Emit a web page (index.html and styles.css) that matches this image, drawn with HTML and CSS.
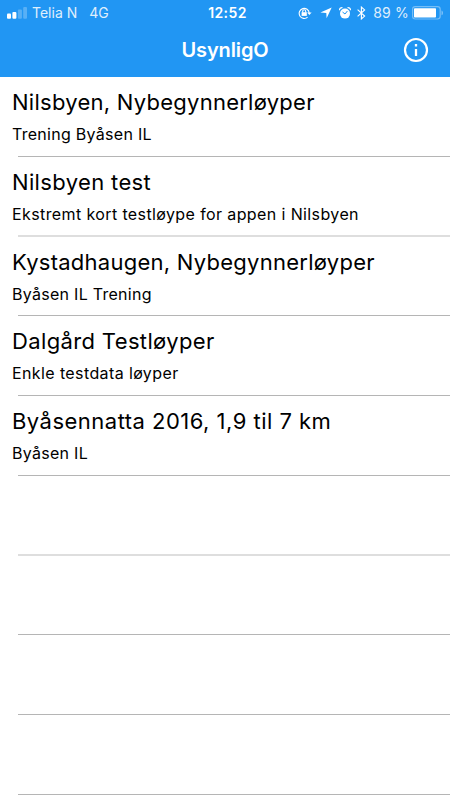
FILE: index.html
```html
<!DOCTYPE html>
<html lang="no">
<head>
<meta charset="utf-8">
<title>UsynligO</title>
<link rel="stylesheet" href="styles.css">
</head>
<body>
<header class="header">
  <div class="status">
    <div class="carrier">
      <svg class="signal" width="20" height="12" viewBox="0 0 20 12" fill="#fff"><rect x="0" y="6.5" width="4" height="5.2" rx="1"/><rect x="5.4" y="5" width="4" height="6.7" rx="1"/><rect x="10.9" y="2.5" width="4" height="9.2" rx="1" opacity=".25"/><rect x="16.2" y="0" width="3.8" height="11.7" rx="1" opacity=".25"/></svg>
      <span class="operator">Telia N</span><span class="network">4G</span>
    </div>
    <span class="clock">12:52</span>
    <div class="indicators">
      <svg width="14" height="12" viewBox="0 0 14 12" fill="none" stroke="#fff" stroke-width="1.1"><path d="M9.6 10.1A5 5 0 1 1 11.2 6.1"/><path d="M9.1 5.5h4.5L11.4 8z" fill="#fff" stroke="none"/><rect x="3.6" y="5.2" width="5.2" height="3.7" fill="#fff" stroke="none"/><path d="M4.7 5.5V4.3a1.5 1.5 0 0 1 3 0v1.2"/></svg>
      <svg class="location" width="12" height="12" viewBox="0 0 12 12" fill="#fff"><path d="M11.7.4L6.6 11.3 6.3 6.1.4 5.6z"/></svg>
      <svg class="alarm" width="12" height="12" viewBox="0 0 12 12"><circle cx="6" cy="6.6" r="5" fill="#fff"/><path d="M.6 3.2Q.4.5 3.5.7M8.5.7Q11.6.5 11.4 3.2" fill="none" stroke="#fff" stroke-width="1.2"/><path d="M3.5 5L6 7l2.4-3" fill="none" stroke="#2196f3"/></svg>
      <svg class="bluetooth" width="9" height="14" viewBox="0 0 9 14" fill="none" stroke="#fff" stroke-width="1.15"><path d="M.6 3.7l7 6.4-3.2 2.8V1.1l3.2 2.8-7 6.4"/></svg>
      <span class="percent">89 %</span>
      <svg class="battery" width="32" height="14" viewBox="0 0 32 14"><rect x=".6" y=".6" width="27.6" height="12.4" rx="2.7" fill="none" stroke="#fff" stroke-opacity=".38" stroke-width="1.2"/><rect x="2" y="2.3" width="22" height="9.2" rx=".8" fill="#fff"/><path d="M29.5 4.5c2 .6 2 4.2 0 4.8z" fill="#fff" opacity=".4"/></svg>
    </div>
  </div>
  <div class="toolbar">
    <h1 class="heading">UsynligO</h1>
    <svg class="info" width="26" height="26" viewBox="0 0 26 26" fill="none" stroke="#fff"><circle cx="13" cy="13" r="11" stroke-width="2.2"/><path d="M13 12v7M13 7v2.5" stroke-width="2.3"/></svg>
  </div>
</header>
<main class="list">
  <article class="row"><h2 class="title">Nilsbyen, Nybegynnerløyper</h2><p class="detail">Trening Byåsen IL</p></article>
  <article class="row soft"><h2 class="title medium">Nilsbyen test</h2><p class="detail loose">Ekstremt kort testløype for appen i Nilsbyen</p></article>
  <article class="row short"><h2 class="title">Kystadhaugen, Nybegynnerløyper</h2><p class="detail">Byåsen IL Trening</p></article>
  <article class="row"><h2 class="title medium">Dalgård Testløyper</h2><p class="detail loose">Enkle testdata løyper</p></article>
  <article class="row"><h2 class="title wide">Byåsennatta 2016, 1,9 til 7 km</h2><p class="detail">Byåsen IL</p></article>
  <div class="row soft"></div>
  <div class="row short"></div>
  <div class="row"></div>
  <div class="row"></div>
</main>
</body>
</html>
```

FILE: styles.css
```css
* { box-sizing: border-box; }
body { margin: 0; height: 800px; overflow: hidden; background: #fff; color: #000; font-family: Inter, "Liberation Sans", sans-serif; }
svg { display: block; flex: none; }
.header { height: 77px; background: #2196f3; color: #fff; }
.status { display: grid; grid-template-columns: 1fr auto 1fr; align-items: center; height: 25px; padding: 0 7px; font-size: 14px; line-height: 20px; white-space: nowrap; }
.carrier { display: flex; align-items: center; }
.operator { margin-left: 5px; opacity: .85; }
.network { margin-left: 12px; opacity: .85; }
.clock { font-weight: 600; letter-spacing: .4px; margin-left: 5px; }
.indicators { display: flex; align-items: center; justify-content: flex-end; margin-right: -1px; }
.location { margin-left: 8px; }
.alarm { margin-left: 7px; }
.bluetooth { margin-left: 6px; }
.percent { margin-left: 7px; letter-spacing: .2px; opacity: .85; }
.battery { margin-left: 3px; }
.toolbar { display: grid; grid-template-columns: 1fr auto 1fr; align-items: center; height: 50px; }
.heading { grid-column: 2; margin: 0; font-size: 20px; line-height: 26px; font-weight: 600; letter-spacing: -.12px; }
.info { justify-self: end; margin-right: 21px; }
.row { display: flex; flex-direction: column; height: 80px; padding: 12px 0 0 12px; background: linear-gradient(#b5b5b5, #b5b5b5) 18px 100% / 100% 1px no-repeat; }
.short { height: 79px; }
.soft { background-image: linear-gradient(#dedede, #dedede); background-size: 100% 2px; }
.title { margin: 0; font-size: 22px; line-height: 27px; font-weight: 400; letter-spacing: .26px; white-space: nowrap; }
.medium { letter-spacing: .36px; }
.wide { letter-spacing: .48px; }
.detail { margin: 8px 0 0; font-size: 16px; line-height: 20px; font-weight: 400; letter-spacing: .28px; white-space: nowrap; }
.loose { letter-spacing: .39px; }
```
